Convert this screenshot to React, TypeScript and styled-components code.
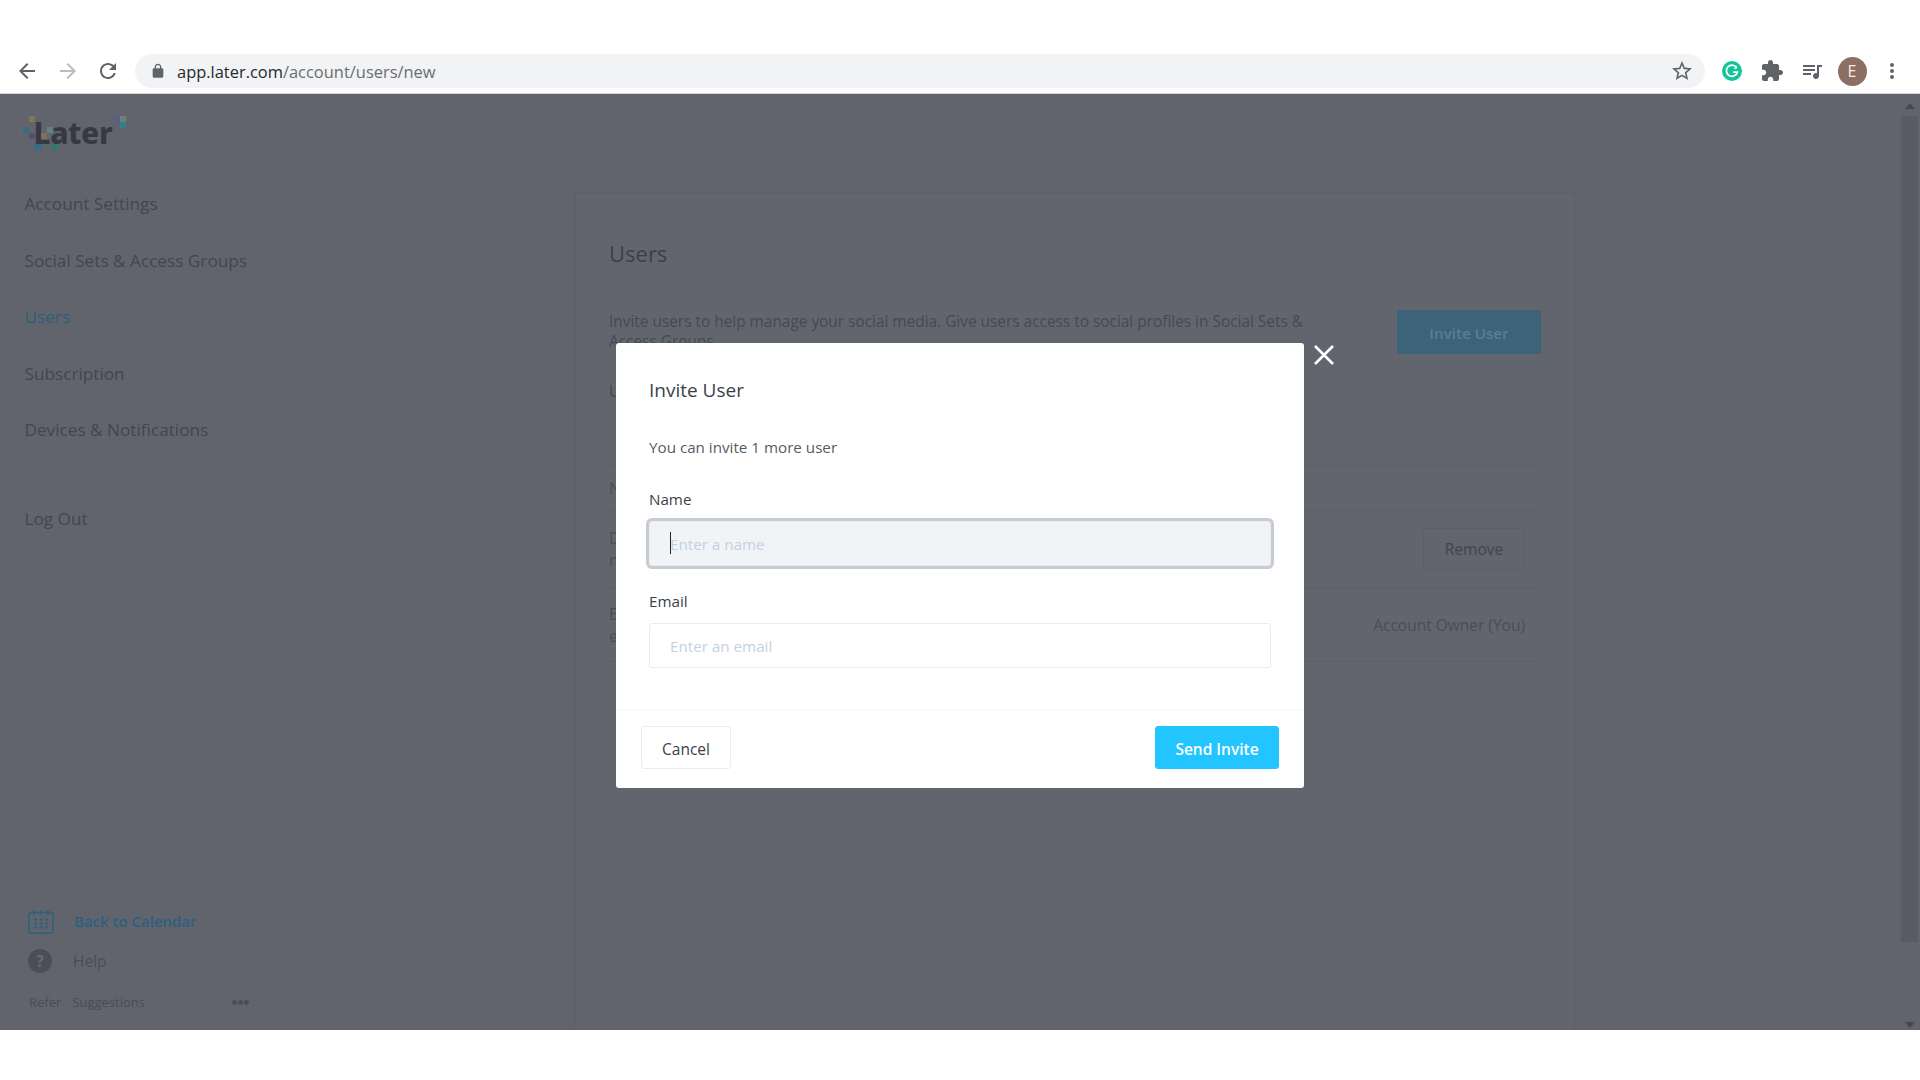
import React from 'react';
import styled, { createGlobalStyle } from 'styled-components';

const GlobalStyle = createGlobalStyle`
  html, body {
    margin: 0;
    padding: 0;
    background: #fff;
    font-family: "Open Sans", "Noto Sans", sans-serif;
  }
  * { box-sizing: border-box; }
`;

const Screen = styled.div`
  width: 1920px;
  height: 1080px;
  overflow: hidden;
  display: flex;
  flex-direction: column;
  background: #fff;
`;

const Toolbar = styled.div`
  margin-top: 54px;
  height: 40px;
  flex: none;
  display: flex;
  align-items: flex-start;
  background: #fff;
  border-bottom: 1px solid #d3d4d6;
`;

const NavIcons = styled.div`
  width: 135px;
  height: 34px;
  flex: none;
  display: flex;
  align-items: center;
  gap: 16.5px;
  padding-left: 15px;
`;

const Omnibox = styled.div`
  width: 1570px;
  height: 34px;
  flex: none;
  display: flex;
  align-items: center;
  padding: 0 11px 0 15px;
  border-radius: 17px;
  background: #f1f3f4;
`;

const Url = styled.div`
  margin-left: 11px;
  flex: 1;
  font-size: 16.45px;
  color: #6a6d71;
  b { font-weight: 400; color: #26282c; }
`;

const Extensions = styled.div`
  flex: 1;
  height: 34px;
  display: flex;
  align-items: center;
  padding-left: 7px;
`;

const ExtensionSlot = styled.div`
  width: 40px;
  flex: none;
  display: flex;
  justify-content: center;
`;

const Avatar = styled.div`
  width: 29px;
  height: 29px;
  border-radius: 50%;
  background: #8d6e63;
  color: #f3ece9;
  font-size: 16px;
  display: flex;
  align-items: center;
  justify-content: center;
`;

const Page = styled.div`
  position: relative;
  height: 936px;
  flex: none;
  display: flex;
  background: #61646d;
`;

const Sidebar = styled.aside`
  width: 575px;
  flex: none;
  display: flex;
  flex-direction: column;
  padding: 20px 0 18px 24.5px;
`;

const Logo = styled.div`
  position: relative;
  width: 104px;
  height: 38px;
  font-family: "Noto Sans", sans-serif;
  font-size: 30px;
  font-weight: 800;
  line-height: 38px;
  padding-left: 9px;
  letter-spacing: -0.4px;
  color: #363943;
`;

const LogoPixels = styled.svg`
  position: absolute;
  left: -1.5px;
  top: 0;
`;

const SideNav = styled.nav`
  margin-top: 23.5px;
  display: flex;
  flex-direction: column;
`;

const SideLink = styled.a<{ $active?: boolean; $gap?: number }>`
  height: 56.5px;
  margin-top: ${({ $gap }) => $gap || 0}px;
  display: flex;
  align-items: center;
  font-size: 17.2px;
  color: ${({ $active }) => ($active ? '#2c607e' : '#43464f')};
`;

const SideFooter = styled.div`
  margin-top: auto;
  display: flex;
  flex-direction: column;
`;

const FooterRow = styled.div`
  height: 40px;
  display: flex;
  align-items: center;
  padding-left: 3.5px;
  gap: 20px;
`;

const FooterLink = styled.span<{ $accent?: boolean }>`
  font-size: ${({ $accent }) => ($accent ? 15 : 15.5)}px;
  font-weight: ${({ $accent }) => ($accent ? 600 : 500)};
  color: ${({ $accent }) => ($accent ? '#2c607e' : '#4a4d56')};
`;

const HelpBadge = styled.div`
  width: 24px;
  height: 24px;
  margin-right: 1px;
  border-radius: 50%;
  background: #4b4e58;
  color: #666973;
  font-size: 16px;
  font-weight: 700;
  display: flex;
  align-items: center;
  justify-content: center;
`;

const FinePrint = styled.div`
  margin-top: 11px;
  height: 20px;
  width: 224px;
  padding-left: 4.5px;
  display: flex;
  align-items: center;
  gap: 11px;
  font-size: 13px;
  color: #494c55;
`;

const MoreDots = styled.div`
  margin-left: auto;
  display: flex;
  gap: 1px;
  span {
    width: 5px;
    height: 5px;
    border-radius: 50%;
    background: #4b4e58;
  }
`;

const Main = styled.main`
  flex: 1;
  display: flex;
  justify-content: space-between;
`;

const Card = styled.section`
  width: 1000px;
  margin-top: 98px;
  padding: 44px 33px 0;
  background: #62656e;
  border: 1px solid #5d6069;
  border-bottom: none;
`;

const CardTitle = styled.h1`
  margin: 0;
  height: 32px;
  font-size: 22px;
  line-height: 32px;
  font-weight: 500;
  color: #3c3f49;
`;

const IntroRow = styled.div`
  margin-top: 41px;
  display: flex;
  justify-content: space-between;
  align-items: flex-start;
`;

const Intro = styled.p`
  margin: 0;
  width: 700px;
  padding-top: 2px;
  font-size: 15.4px;
  line-height: 20px;
  color: #464953;
`;

const DimPrimary = styled.div`
  width: 144px;
  height: 44px;
  padding-top: 1px;
  display: flex;
  align-items: center;
  justify-content: center;
  border-radius: 3px;
  background: #3c6378;
  color: #5d7d90;
  font-size: 15.2px;
  font-weight: 600;
`;

const SubTitle = styled.div`
  margin-top: 25px;
  height: 24px;
  font-size: 15.5px;
  line-height: 24px;
  color: #464953;
`;

const TableRow = styled.div<{ $height: number }>`
  height: ${({ $height }) => $height}px;
  display: flex;
  align-items: center;
  justify-content: space-between;
  padding-right: 16px;
  border-bottom: 1px solid #5c5f68;
  font-size: 15.5px;
  line-height: 22px;
  color: #4a4d56;
`;

const TableHead = styled(TableRow)`
  border-top: 1px solid #5c5f68;
  margin-top: 62px;
`;

const DimButton = styled.div`
  width: 102px;
  height: 42px;
  display: flex;
  align-items: center;
  justify-content: center;
  border: 1px solid #5c5f68;
  border-radius: 3px;
  color: #41444e;
  font-size: 15.5px;
  font-weight: 500;
`;

const Scrollbar = styled.div`
  width: 19px;
  flex: none;
  display: flex;
  flex-direction: column;
  align-items: center;
  padding-top: 9px;
`;

const ScrollThumb = styled.div`
  width: 17px;
  height: 826px;
  margin: 7px 2px 0 0;
  background: #585b64;
`;

const ScrollArrow = styled.div<{ $down?: boolean }>`
  width: 0;
  height: 0;
  margin-right: 2px;
  border-left: 5px solid transparent;
  border-right: 5px solid transparent;
  ${({ $down }) => ($down ? 'border-top: 6px solid #45484f; margin-top: 80px;' : 'border-bottom: 6px solid #45484f;')}
`;

const Overlay = styled.div`
  position: absolute;
  inset: 0;
  display: flex;
  justify-content: center;
  align-items: flex-start;
  padding-top: 249px;
`;

const Modal = styled.div`
  position: relative;
  width: 688px;
  height: 445px;
  display: flex;
  flex-direction: column;
  background: #fff;
  border-radius: 3px;
`;

const CloseButton = styled.button`
  position: absolute;
  top: 1px;
  right: -31px;
  width: 22px;
  height: 22px;
  padding: 0;
  border: none;
  background: none;
  display: flex;
`;

const ModalBody = styled.div`
  flex: 1;
  padding: 33px 33px 0;
`;

const ModalTitle = styled.h2`
  margin: 0;
  height: 28px;
  font-size: 19px;
  line-height: 28px;
  font-weight: 500;
  color: #3b3f4a;
`;

const ModalText = styled.p`
  margin: 30px 0 0;
  height: 26px;
  font-size: 15.2px;
  line-height: 26px;
  color: #565a65;
`;

const Field = styled.div<{ $gap: number }>`
  margin-top: ${({ $gap }) => $gap}px;
  display: flex;
  flex-direction: column;
`;

const FieldLabel = styled.label`
  height: 24px;
  font-size: 15.2px;
  line-height: 22px;
  font-weight: 500;
  color: #3b3f4a;
`;

const InputWrap = styled.div`
  position: relative;
  margin-top: 9px;
  height: 45px;
`;

const TextInput = styled.input<{ $focused?: boolean }>`
  display: block;
  width: 622px;
  height: 45px;
  padding: 0 20px;
  border: 1px solid #e6ecf2;
  border-radius: 3px;
  outline: none;
  font-family: inherit;
  font-size: 15.2px;
  color: #3b3f4a;
  background: ${({ $focused }) => ($focused ? '#f1f4f7' : '#fff')};
  box-shadow: ${({ $focused }) => ($focused ? '0 0 0 3px #c9ccd0' : 'none')};
  &::placeholder { color: #c3d1e0; opacity: 1; }
`;

const Caret = styled.span`
  position: absolute;
  left: 21px;
  top: 11px;
  width: 1px;
  height: 22px;
  background: #20232b;
`;

const ModalFooter = styled.div`
  height: 79px;
  flex: none;
  display: flex;
  justify-content: space-between;
  align-items: flex-start;
  padding: 16px 25px 0;
  border-top: 1px solid #f6f7f9;
`;

const ActionButton = styled.button<{ $primary?: boolean }>`
  width: ${({ $primary }) => ($primary ? 124 : 90)}px;
  height: 43px;
  padding: 2px 0 0;
  border-radius: 3px;
  border: 1px solid ${({ $primary }) => ($primary ? '#22c5ff' : '#e6ecf2')};
  background: ${({ $primary }) => ($primary ? '#22c5ff' : '#fff')};
  color: ${({ $primary }) => ($primary ? '#fff' : '#3b3f4a')};
  font-family: inherit;
  font-size: 15.5px;
  font-weight: ${({ $primary }) => ($primary ? 600 : 500)};
`;

const Icon: React.FC<{ d: string; color: string; size?: number }> = ({ d, color, size = 24 }) => (
  <svg width={size} height={size} viewBox="0 0 24 24" fill={color}>
    <path d={d} />
  </svg>
);

const ARROW_BACK = 'M20 11H7.83l5.59-5.59L12 4l-8 8 8 8 1.41-1.41L7.83 13H20v-2z';
const ARROW_FORWARD = 'M12 4l-1.41 1.41L16.17 11H4v2h12.17l-5.58 5.59L12 20l8-8z';
const REFRESH = 'M17.65 6.35C16.2 4.9 14.21 4 12 4c-4.42 0-7.99 3.58-7.99 8s3.57 8 7.99 8c3.73 0 6.84-2.55 7.73-6h-2.08c-.82 2.33-3.04 4-5.65 4-3.31 0-6-2.69-6-6s2.69-6 6-6c1.66 0 3.14.69 4.22 1.78L13 11h7V4l-2.35 2.35z';
const LOCK = 'M18 8h-1V6c0-2.76-2.24-5-5-5S7 3.24 7 6v2H6c-1.1 0-2 .9-2 2v10c0 1.1.9 2 2 2h12c1.1 0 2-.9 2-2V10c0-1.1-.9-2-2-2zM9 8V6c0-1.66 1.34-3 3-3s3 1.34 3 3v2H9z';
const STAR = 'M22 9.24l-7.19-.62L12 2 9.19 8.63 2 9.24l5.46 4.73L5.82 21 12 17.27 18.18 21l-1.63-7.03L22 9.24zM12 15.4l-3.76 2.27 1-4.28-3.32-2.88 4.38-.38L12 6.1l1.71 4.04 4.38.38-3.32 2.88 1 4.28L12 15.4z';
const PUZZLE = 'M20.5 11H19V7c0-1.1-.9-2-2-2h-4V3.5C13 2.12 11.88 1 10.5 1S8 2.12 8 3.5V5H4c-1.1 0-1.99.9-1.99 2v3.8H3.5c1.49 0 2.7 1.21 2.7 2.7s-1.21 2.7-2.7 2.7H2V20c0 1.1.9 2 2 2h3.8v-1.5c0-1.49 1.21-2.7 2.7-2.7 1.49 0 2.7 1.21 2.7 2.7V22H17c1.1 0 2-.9 2-2v-4h1.5c1.38 0 2.5-1.12 2.5-2.5S21.88 11 20.5 11z';
const MEDIA = 'M15 6H3v2h12V6zm0 4H3v2h12v-2zM3 16h8v-2H3v2zM17 6v8.18c-.31-.11-.65-.18-1-.18-1.66 0-3 1.34-3 3s1.34 3 3 3 3-1.34 3-3V8h3V6h-5z';

const GrammarlyIcon = () => (
  <svg width="22" height="22" viewBox="0 0 22 22">
    <circle cx="11" cy="11" r="10" fill="#15c39a" />
    <path d="M15.4 7.2A5.6 5.6 0 1 0 16.4 12.2H12.2" fill="none" stroke="#fff" strokeWidth="1.7" />
    <path d="M15.8 5.6v3.2h-3.2z" fill="#fff" />
  </svg>
);

const KebabIcon = () => (
  <svg width="22" height="24" viewBox="0 0 22 24" fill="#5f6368">
    <circle cx="11" cy="6" r="2" />
    <circle cx="11" cy="12" r="2" />
    <circle cx="11" cy="18" r="2" />
  </svg>
);

const CalendarIcon = () => (
  <svg width="26" height="25" viewBox="0 0 26 25" fill="none" stroke="#2c607e" strokeWidth="1.5">
    <rect x="1" y="3.5" width="24" height="20.5" rx="1.5" />
    <path d="M6 1v5M13 1v5M20 1v5" />
    <path d="M6 10.5h3M11.5 10.5h3M17 10.5h3M6 14.5h3M11.5 14.5h3M17 14.5h3M6 18.5h3M11.5 18.5h3M17 18.5h3" strokeWidth="2" />
  </svg>
);

const logoPixels: [number, number, string][] = [
  [6, 2, '#7f7560'], [0, 13, '#3e6a80'], [6, 19, '#50507a'], [24, 13, '#66807c'], [18, 19, '#807060'],
  [12, 30, '#2e6f8a'], [29, 30, '#2c7a70'], [91, 2, '#5a5e8c'], [97, 2, '#6e8070'], [97, 8, '#3a7a94'],
];

const App: React.FC = () => {
  return (
    <Screen>
      <GlobalStyle />
      <Toolbar>
        <NavIcons>
          <Icon d={ARROW_BACK} color="#5f6368" />
          <Icon d={ARROW_FORWARD} color="#babcbe" />
          <Icon d={REFRESH} color="#5f6368" />
        </NavIcons>
        <Omnibox>
          <Icon d={LOCK} color="#5f6368" size={16} />
          <Url><b>app.later.com</b>/account/users/new</Url>
          <Icon d={STAR} color="#5f6368" />
        </Omnibox>
        <Extensions>
          <ExtensionSlot><GrammarlyIcon /></ExtensionSlot>
          <ExtensionSlot><Icon d={PUZZLE} color="#5f6368" /></ExtensionSlot>
          <ExtensionSlot><Icon d={MEDIA} color="#5f6368" /></ExtensionSlot>
          <ExtensionSlot><Avatar>E</Avatar></ExtensionSlot>
          <ExtensionSlot><KebabIcon /></ExtensionSlot>
        </Extensions>
      </Toolbar>

      <Page>
        <Sidebar>
          <Logo>
            Later
            <LogoPixels width="104" height="38" viewBox="0 0 104 38">
              {logoPixels.map(([x, y, fill]) => (
                <rect key={`${x}-${y}`} x={x} y={y} width="6" height="6" fill={fill} />
              ))}
            </LogoPixels>
          </Logo>
          <SideNav>
            <SideLink>Account Settings</SideLink>
            <SideLink>Social Sets &amp; Access Groups</SideLink>
            <SideLink $active>Users</SideLink>
            <SideLink>Subscription</SideLink>
            <SideLink>Devices &amp; Notifications</SideLink>
            <SideLink $gap={32}>Log Out</SideLink>
          </SideNav>
          <SideFooter>
            <FooterRow>
              <CalendarIcon />
              <FooterLink $accent>Back to Calendar</FooterLink>
            </FooterRow>
            <FooterRow>
              <HelpBadge>?</HelpBadge>
              <FooterLink>Help</FooterLink>
            </FooterRow>
            <FinePrint>
              <span>Refer</span>
              <span>Suggestions</span>
              <MoreDots><span /><span /><span /></MoreDots>
            </FinePrint>
          </SideFooter>
        </Sidebar>

        <Main>
          <Card>
            <CardTitle>Users</CardTitle>
            <IntroRow>
              <Intro>Invite users to help manage your social media. Give users access to social profiles in Social Sets &amp; Access Groups</Intro>
              <DimPrimary>Invite User</DimPrimary>
            </IntroRow>
            <SubTitle>Users</SubTitle>
            <TableHead $height={46}>Name</TableHead>
            <TableRow $height={77}>
              <div>Dana<br />name</div>
              <DimButton>Remove</DimButton>
            </TableRow>
            <TableRow $height={74}>
              <div>Evan<br />email</div>
              <span>Account Owner (You)</span>
            </TableRow>
          </Card>
          <Scrollbar>
            <ScrollArrow />
            <ScrollThumb />
            <ScrollArrow $down />
          </Scrollbar>
        </Main>

        <Overlay>
          <Modal>
            <CloseButton aria-label="Close">
              <svg width="22" height="22" viewBox="0 0 22 22" stroke="#fff" strokeWidth="2.6">
                <path d="M2 2l18 18M20 2L2 20" />
              </svg>
            </CloseButton>
            <ModalBody>
              <ModalTitle>Invite User</ModalTitle>
              <ModalText>You can invite 1 more user</ModalText>
              <Field $gap={28}>
                <FieldLabel>Name</FieldLabel>
                <InputWrap>
                  <TextInput $focused placeholder="Enter a name" />
                  <Caret />
                </InputWrap>
              </Field>
              <Field $gap={24}>
                <FieldLabel>Email</FieldLabel>
                <InputWrap>
                  <TextInput placeholder="Enter an email" />
                </InputWrap>
              </Field>
            </ModalBody>
            <ModalFooter>
              <ActionButton>Cancel</ActionButton>
              <ActionButton $primary>Send Invite</ActionButton>
            </ModalFooter>
          </Modal>
        </Overlay>
      </Page>
    </Screen>
  );
};

export default App;
